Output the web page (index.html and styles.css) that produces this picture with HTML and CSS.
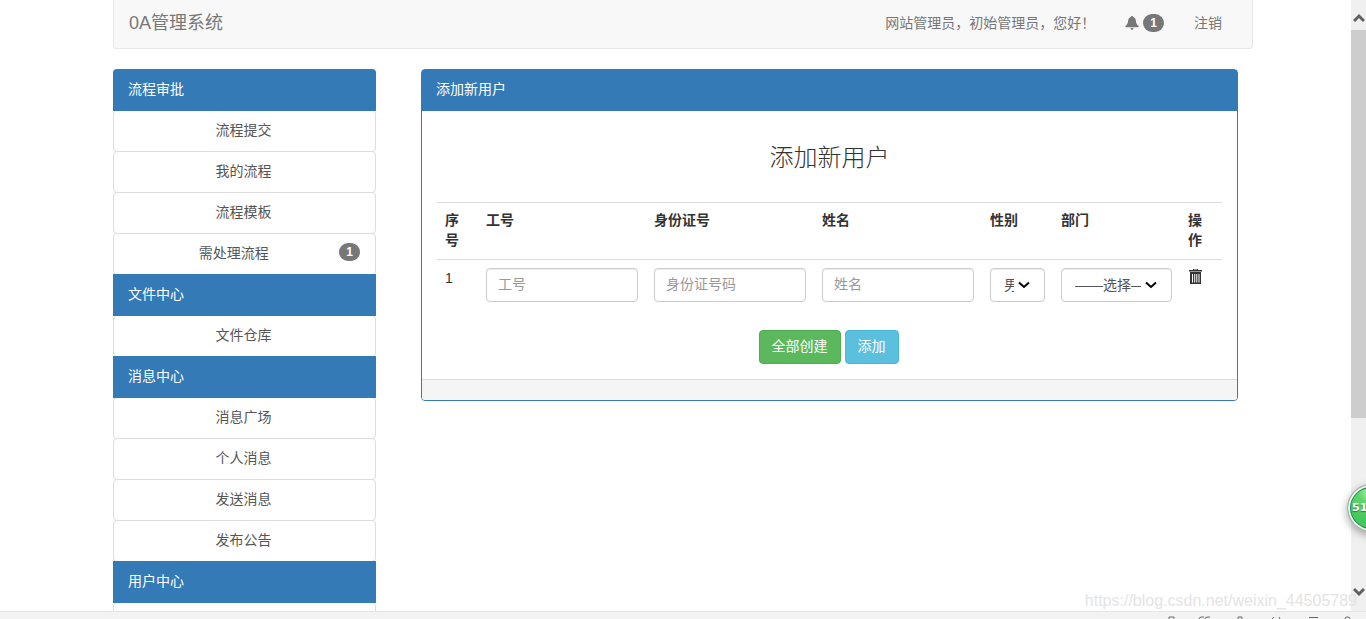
FILE: index.html
```html
<!DOCTYPE html>
<html lang="zh-CN">
<head>
<meta charset="utf-8">
<title>0A管理系统</title>
<link rel="stylesheet" href="styles.css">
</head>
<body>
<div class="window">
  <div class="page">
    <div class="container">
      <header class="navbar">
        <a class="brand" href="#">0A管理系统</a>
        <nav class="nav-links">
          <a href="#">网站管理员，初始管理员，您好！</a>
          <a href="#" class="notice" aria-label="消息">
            <svg class="bell" viewBox="0 0 14 14" aria-hidden="true"><path d="M7 0c.7 0 1.100.5 1.100 1.100C9.800 1.600 10.700 3 10.900 4.800c.2 2.400 1 3.800 2.600 5.200v1.200H.5V10c1.600-1.400 2.400-2.800 2.600-5.200C3.300 3 4.200 1.600 5.900 1.100 5.900.5 6.300 0 7 0zM5.500 12h3c0 1-.6 1.800-1.500 1.800S5.500 13 5.500 12z"/></svg>
            <span class="badge">1</span>
          </a>
          <a href="#">注销</a>
        </nav>
      </header>

      <div class="columns">
        <aside class="sidebar">
          <div class="menu-title">流程审批</div>
          <a class="menu-item" href="#">流程提交</a>
          <a class="menu-item" href="#">我的流程</a>
          <a class="menu-item" href="#">流程模板</a>
          <a class="menu-item with-badge" href="#"><span class="menu-text">需处理流程</span><span class="badge">1</span></a>
          <div class="menu-title">文件中心</div>
          <a class="menu-item" href="#">文件仓库</a>
          <div class="menu-title">消息中心</div>
          <a class="menu-item" href="#">消息广场</a>
          <a class="menu-item" href="#">个人消息</a>
          <a class="menu-item" href="#">发送消息</a>
          <a class="menu-item" href="#">发布公告</a>
          <div class="menu-title">用户中心</div>
          <a class="menu-item" href="#" aria-label="用户管理"></a>
        </aside>

        <main class="panel">
          <div class="panel-heading">添加新用户</div>
          <form class="panel-body">
            <h3>添加新用户</h3>
            <table class="table">
              <colgroup>
                <col class="col-index"><col><col><col><col class="col-sex"><col class="col-dept"><col class="col-action">
              </colgroup>
              <thead>
                <tr><th>序号</th><th>工号</th><th>身份证号</th><th>姓名</th><th>性别</th><th>部门</th><th>操作</th></tr>
              </thead>
              <tbody>
                <tr>
                  <td>1</td>
                  <td><input class="control" type="text" placeholder="工号" aria-label="工号"></td>
                  <td><input class="control" type="text" placeholder="身份证号码" aria-label="身份证号"></td>
                  <td><input class="control" type="text" placeholder="姓名" aria-label="姓名"></td>
                  <td>
                    <div class="select">
                      <select class="control" aria-label="性别"><option>男</option><option>女</option></select>
                      <svg class="chevron" viewBox="0 0 12 8" aria-hidden="true"><path d="M1 1.500l5 4.500 5-4.500"/></svg>
                    </div>
                  </td>
                  <td>
                    <div class="select">
                      <select class="control" aria-label="部门"><option>——选择——</option></select>
                      <svg class="chevron" viewBox="0 0 12 8" aria-hidden="true"><path d="M1 1.500l5 4.500 5-4.500"/></svg>
                    </div>
                  </td>
                  <td>
                    <button class="trash" type="button" aria-label="删除">
                      <svg viewBox="0 0 15 16" aria-hidden="true"><path fill-rule="evenodd" d="M5 1h5v1h4v1.500H1V2h4zM6 1.500V2h3v-.5zM2 4h11v12H2zM4 6v8.500h1V6zM6.200 6v8.500h1V6zM8.300 6v8.500h1V6zM10.500 6v8.500h1V6z"/></svg>
                    </button>
                  </td>
                </tr>
              </tbody>
            </table>
            <div class="actions">
              <button class="btn btn-success" type="button">全部创建</button>
              <button class="btn btn-info" type="button">添加</button>
            </div>
          </form>
          <div class="panel-footer"></div>
        </main>
      </div>
    </div>
  </div>

  <div class="scrollbar" aria-hidden="true">
    <svg class="arrow" viewBox="0 0 12 10"><path d="M1 8l5-5 5 5"/></svg>
    <div class="thumb"></div>
    <svg class="arrow arrow-down" viewBox="0 0 12 10"><path d="M1 2l5 5 5-5"/></svg>
  </div>
  <div class="ball">51</div>
  <div class="watermark">https://blog.csdn.net/weixin_44505789</div>

  <footer class="statusbar">
    <svg viewBox="0 0 196 3" aria-hidden="true"><path d="M9 3V1h5v2M39 3q0-2 3-2h2M45 3q0-2 3-2h2M78 3V1h4v2M112 3l2-2M119 1l1 2M149 1.500h9M185 3q0-2 2-2h1q2 0 2 2"/></svg>
  </footer>
</div>
</body>
</html>
```

FILE: styles.css
```css
* { box-sizing: border-box; }

body {
  margin: 0;
  background: #fff;
  color: #333;
  font-family: "Liberation Sans", "Noto Sans CJK SC", sans-serif;
  font-size: 14px;
  line-height: 20px;
}

a { color: inherit; text-decoration: none; }

.window {
  position: relative;
  display: flex;
  flex-direction: column;
  height: 100vh;
  overflow: hidden;
}

.page { flex: 1; min-height: 0; overflow: hidden; }

.container { max-width: 1140px; margin: 0 auto; }

.navbar {
  display: flex;
  justify-content: space-between;
  align-items: center;
  padding: 12px 15px 14px;
  margin-bottom: 20px;
  background: #f8f8f8;
  border: 1px solid #e7e7e7;
  border-top: 0;
  border-radius: 0 0 4px 4px;
  color: #777;
}

.brand { font-size: 18px; line-height: 22px; }
.nav-links { display: flex; gap: 30px; padding-right: 15px; }
.notice { display: flex; align-items: center; gap: 4px; }
.bell { width: 14px; height: 14px; fill: #777; }

.badge {
  padding: 3px 7px;
  border-radius: 10px;
  background: #777;
  color: #fff;
  font-size: 12px;
  font-weight: 700;
  line-height: 12px;
}

.columns {
  display: grid;
  grid-template-columns: 263px 1fr;
  gap: 45px;
  align-items: start;
  padding-right: 15px;
}

.sidebar { display: flex; flex-direction: column; }

.menu-title,
.menu-item {
  min-height: 42px;
  padding: 10px 15px;
  margin-bottom: -1px;
}

.menu-title {
  z-index: 1;
  background: #337ab7;
  color: #fff;
}

.menu-title:first-child { border-radius: 4px 4px 0 0; }

.menu-item {
  padding: 9px 16px 11px 14px;
  border: 1px solid #ddd;
  border-radius: 4px;
  color: #555;
  text-align: center;
}

.with-badge { display: flex; align-items: flex-start; padding-right: 15px; }
.menu-text { flex: 1; }

.panel {
  border: 1px solid #337ab7;
  border-radius: 4px;
}

.panel-heading {
  padding: 9px 14px 12px;
  background: #337ab7;
  color: #fff;
}

.panel-body { padding: 15px; }

h3 {
  margin: 19px 0 31px;
  font-size: 24px;
  font-weight: 300;
  line-height: 26px;
  text-align: center;
}

.table {
  width: 100%;
  margin-bottom: 20px;
  border-collapse: separate;
  border-spacing: 0;
  table-layout: fixed;
}

.table th,
.table td {
  padding: 8px;
  border-top: 1px solid #ddd;
  text-align: left;
  vertical-align: top;
}

.table th { padding: 7px 8px 9px; }

.col-index { width: 41px; }
.col-sex { width: 71px; }
.col-dept { width: 127px; }
.col-action { width: 42px; }

.control {
  display: block;
  width: 100%;
  height: 34px;
  padding: 5px 11px 7px;
  border: 1px solid #ccc;
  border-radius: 4px;
  background: #fff;
  box-shadow: inset 0 1px 1px rgba(0, 0, 0, 0.075);
  color: #555;
  font: inherit;
}

.control::placeholder { color: #999; }

.select { position: relative; }
.select .control { appearance: none; padding: 6px 30px 6px 13px; text-overflow: clip; }

.chevron {
  position: absolute;
  top: 13px;
  right: 15px;
  width: 12px;
  height: 8px;
  fill: none;
  stroke: #000;
  stroke-width: 2;
  pointer-events: none;
}

.trash { display: block; padding: 0; border: 0; background: none; }
.trash svg { display: block; width: 15px; height: 16px; fill: #333; }

.actions { display: flex; justify-content: center; gap: 4px; padding-right: 2px; }

.btn {
  padding: 5px 12px 7px;
  border: 1px solid;
  border-radius: 4px;
  color: #fff;
  font: inherit;
}

.btn-success { background: #5cb85c; border-color: #4cae4c; }
.btn-info { background: #5bc0de; border-color: #46b8da; }

.panel-footer {
  height: 21px;
  border-top: 1px solid #ddd;
  border-radius: 0 0 3px 3px;
  background: #f5f5f5;
}

.scrollbar {
  position: absolute;
  top: 0;
  right: 0;
  bottom: 8px;
  display: flex;
  flex-direction: column;
  align-items: center;
  width: 15px;
  padding: 13px 0 14px;
  background: #f0f0f0;
}

.thumb { width: 100%; height: 388px; margin-top: 7px; background: #cdcdcd; }
.arrow { width: 12px; height: 10px; fill: none; stroke: #606060; stroke-width: 3; }
.arrow-down { margin-top: auto; }

.ball {
  position: absolute;
  top: 484px;
  right: -29px;
  width: 48px;
  height: 48px;
  padding-left: 4px;
  border: 1px solid #aaa;
  border-radius: 50%;
  background: radial-gradient(circle at 22px 6px, #b4eeb6 0, #5fd56a 12px, #46c95c 28px);
  box-shadow: 0 3px 8px rgba(0, 0, 0, 0.35), inset 0 0 0 2px #f2f2f2, inset 0 0 0 3px #168a50;
  color: #fff;
  font: 700 11px/46px "DejaVu Sans", sans-serif;
  text-shadow: 0 1px 1px #2a7a3a;
}

.watermark {
  position: absolute;
  right: 9px;
  bottom: 8px;
  color: #e4e4e4;
  font-size: 16px;
}

.statusbar {
  display: flex;
  justify-content: flex-end;
  align-items: flex-end;
  height: 8px;
  padding-right: 10px;
  border-top: 1px solid #e5e5e5;
  background: #f3f3f3;
}

.statusbar svg { width: 196px; height: 3px; fill: none; stroke: #666; }
```
